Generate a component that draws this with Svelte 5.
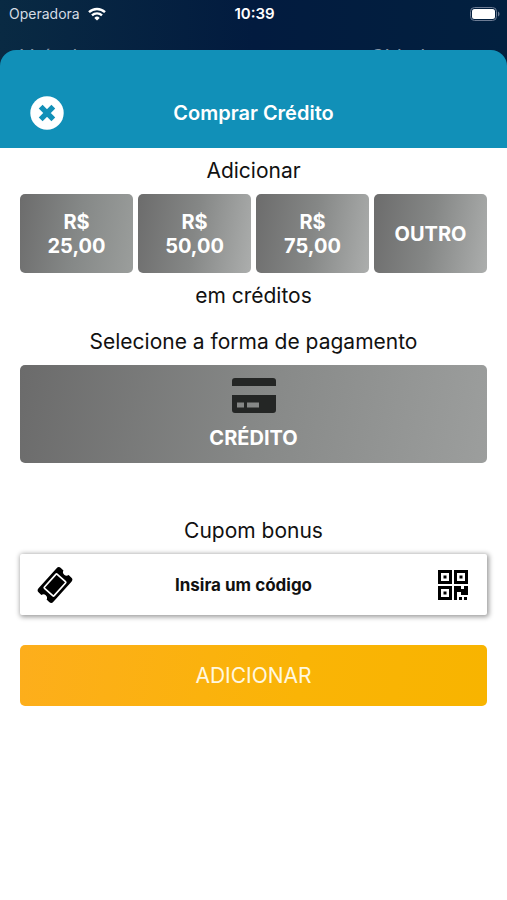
<script lang="ts">
	let amounts = [
		{ id: '25', lines: ['R$', '25,00'] },
		{ id: '50', lines: ['R$', '50,00'] },
		{ id: '75', lines: ['R$', '75,00'] },
		{ id: 'other', lines: ['OUTRO'] }
	];

	let selected = $state('25');
	let coupon = $state('');
</script>

<div class="screen">
	<div class="status">
		<div class="carrier">
			<span>Operadora</span>
			<svg class="wifi" viewBox="0 0 18 14" fill="none" stroke="#fff" stroke-width="2.4">
				<path d="M1 5.2a11.6 11.6 0 0 1 16 0"></path>
				<path d="M4 8.4a7.2 7.2 0 0 1 10 0"></path>
				<path d="M9 13.6 6.3 10.9a3.9 3.9 0 0 1 5.4 0z" fill="#fff" stroke="none"></path>
			</svg>
		</div>
		<time>10:39</time>
		<svg class="battery" viewBox="0 0 30 14">
			<rect x="0.5" y="0.5" width="26" height="13" rx="4" fill="none" stroke="#6d7c94"></rect>
			<rect x="2" y="2" width="23" height="10" rx="2.5" fill="#fff"></rect>
			<path d="M28 4.5c2 .8 2 4.2 0 5z" fill="#6d7c94"></path>
		</svg>
	</div>

	<div class="behind">
		<span>Veículo</span>
		<span>Cidade</span>
	</div>

	<main class="sheet">
		<header>
			<button class="close" type="button" aria-label="Fechar">
				<svg viewBox="0 0 34 34">
					<circle cx="17" cy="17" r="16.7" fill="#fff"></circle>
					<path d="M12.600 12.600l8.800 8.800M21.400 12.600l-8.800 8.800" stroke="#1190b8" stroke-width="5.400" stroke-linecap="square"></path>
				</svg>
			</button>
			<h1>Comprar Crédito</h1>
		</header>

		<div class="content">
			<p class="label">Adicionar</p>
			<div class="amounts">
				{#each amounts as amount (amount.id)}
					<button type="button" class:selected={selected === amount.id} onclick={() => (selected = amount.id)}>
						{#each amount.lines as line}
							<span>{line}</span>
						{/each}
					</button>
				{/each}
			</div>
			<p class="label">em créditos</p>

			<p class="label payment">Selecione a forma de pagamento</p>
			<button class="method" type="button">
				<svg viewBox="0 0 44 36" fill="#242625">
					<path d="M3 0h38a3 3 0 0 1 3 3v5H0V3a3 3 0 0 1 3-3z"></path>
					<path fill-rule="evenodd" d="M0 17h44v15a3 3 0 0 1-3 3H3a3 3 0 0 1-3-3zM5 24.500v5h7v-5zm10 0v5h12v-5z"></path>
				</svg>
				<span>CRÉDITO</span>
			</button>

			<label class="label" for="coupon">Cupom bonus</label>
			<div class="coupon">
				<svg class="ticket" viewBox="0 0 36 36">
					<g transform="rotate(-48 18 18)">
						<path
							d="M4.500 8h27a3 3 0 0 1 3 3v3.500a3.600 3.600 0 0 0 0 7V25a3 3 0 0 1-3 3h-27a3 3 0 0 1-3-3v-3.500a3.600 3.600 0 0 0 0-7V11a3 3 0 0 1 3-3z"
						></path>
						<rect x="8.500" y="11.500" width="19" height="13" rx="1" fill="none" stroke="#fff" stroke-width="1.700"></rect>
					</g>
				</svg>
				<input id="coupon" type="text" placeholder="Insira um código" bind:value={coupon} />
				<button class="scan" type="button" aria-label="Ler QR code">
					<svg viewBox="0 0 30 30">
						<path
							fill-rule="evenodd"
							d="M0 0h14v14H0zM3 3v8h8V3zM16 0h14v14H16zM19 3v8h8V3zM0 16h14v14H0zM3 19v8h8v-8zM5.500 5.500h3v3h-3zM21.500 5.500h3v3h-3zM5.500 21.500h3v3h-3z"
						></path>
						<path d="M16 16h7v3h3v-3h4v9h-7v-3h-4v8h-3zM21 27h3v3h-3zM26 27h3v3h-3z"></path>
					</svg>
				</button>
			</div>

			<button class="submit" type="button">ADICIONAR</button>
		</div>
	</main>
</div>

<style>
	:global(body) {
		margin: 0;
		background: #fff;
	}

	.screen {
		min-height: 100vh;
		background: linear-gradient(90deg, #092a43, #021b3f 50%, #02203f) top / 100% 80px no-repeat;
		font-family: Inter, 'Liberation Sans', sans-serif;
		color: #111;
	}

	button {
		border: none;
		padding: 0;
		font: inherit;
		color: #fff;
		cursor: pointer;
	}

	.status {
		display: grid;
		grid-template-columns: 1fr auto 1fr;
		align-items: center;
		height: 27px;
		padding: 0 7px 0 9px;
		color: #fff;
		font-size: 15px;
	}

	.carrier {
		display: flex;
		align-items: center;
		gap: 8px;
		color: #d5dce4;
		font-size: 14px;
	}

	.wifi {
		width: 18px;
		height: 14px;
	}

	.status time {
		font-weight: 600;
	}

	.battery {
		width: 30px;
		height: 14px;
		justify-self: end;
	}

	/* header of the page below, mostly covered by the sheet */
	.behind {
		display: flex;
		justify-content: space-between;
		height: 24px;
		padding: 18px 70px 0 20px;
		color: #8494a5;
		font-size: 20px;
		line-height: 24px;
	}

	.sheet {
		position: relative;
		margin-top: -19px;
	}

	header {
		display: grid;
		grid-template-columns: 34px 1fr 34px;
		align-items: center;
		box-sizing: border-box;
		height: 98px;
		padding: 28px 30px 0;
		border-radius: 16px 16px 0 0;
		background: #1190b8;
		color: #fff;
	}

	.close {
		width: 34px;
		height: 34px;
		background: none;
	}

	.close svg {
		display: block;
	}

	h1 {
		margin: 0;
		font-size: 20px;
		font-weight: 600;
		line-height: 26px;
		text-align: center;
	}

	.content {
		padding: 10px 20px 40px;
		background: #fff;
	}

	.label {
		display: block;
		margin: 0;
		font-size: 21px;
		line-height: 26px;
		text-align: center;
	}

	.amounts {
		display: grid;
		grid-template-columns: repeat(4, 1fr);
		gap: 5px;
		margin: 10px 0;
	}

	.amounts button {
		display: flex;
		flex-direction: column;
		align-items: center;
		justify-content: center;
		height: 79px;
		border-radius: 5px;
		background: linear-gradient(100deg, #6c6c6c, #858786 50%, #acaead);
		font-size: 20px;
		font-weight: 700;
		line-height: 24px;
	}

	.amounts button.selected {
		background: linear-gradient(100deg, #6c6c6c, #858887 50%, #9b9e9c);
	}

	.payment {
		margin-top: 20px;
	}

	.method {
		display: flex;
		flex-direction: column;
		align-items: center;
		gap: 12px;
		box-sizing: border-box;
		width: 100%;
		height: 98px;
		margin: 10px 0 55px;
		padding-top: 13px;
		border-radius: 5px;
		background: linear-gradient(100deg, #6b6b6b, #868887 50%, #9c9e9d);
		font-size: 20px;
		font-weight: 700;
		line-height: 24px;
	}

	.method svg {
		width: 44px;
		height: 36px;
	}

	.coupon {
		display: flex;
		align-items: center;
		height: 61px;
		margin: 10px 0 30px;
		padding: 0 19px 0 17px;
		border-radius: 2px;
		background: #fff;
		box-shadow: 1px 1px 5px 1px rgba(0, 0, 0, 0.4);
	}

	.ticket {
		width: 36px;
		height: 36px;
	}

	.coupon input {
		flex: 1;
		min-width: 0;
		padding: 0 24px 0 0;
		border: none;
		outline: none;
		background: none;
		color: #111;
		font: 700 17px/24px Inter, 'Liberation Sans', sans-serif;
		text-align: center;
	}

	.coupon input::placeholder {
		color: #111;
		opacity: 1;
	}

	.scan {
		width: 30px;
		height: 30px;
		background: none;
	}

	.scan svg {
		display: block;
	}

	.submit {
		display: block;
		width: 100%;
		height: 61px;
		border-radius: 5px;
		background: linear-gradient(100deg, #fdae1c, #fab406 60%, #f8b400);
		color: #fff8e0;
		font-size: 21px;
	}
</style>
